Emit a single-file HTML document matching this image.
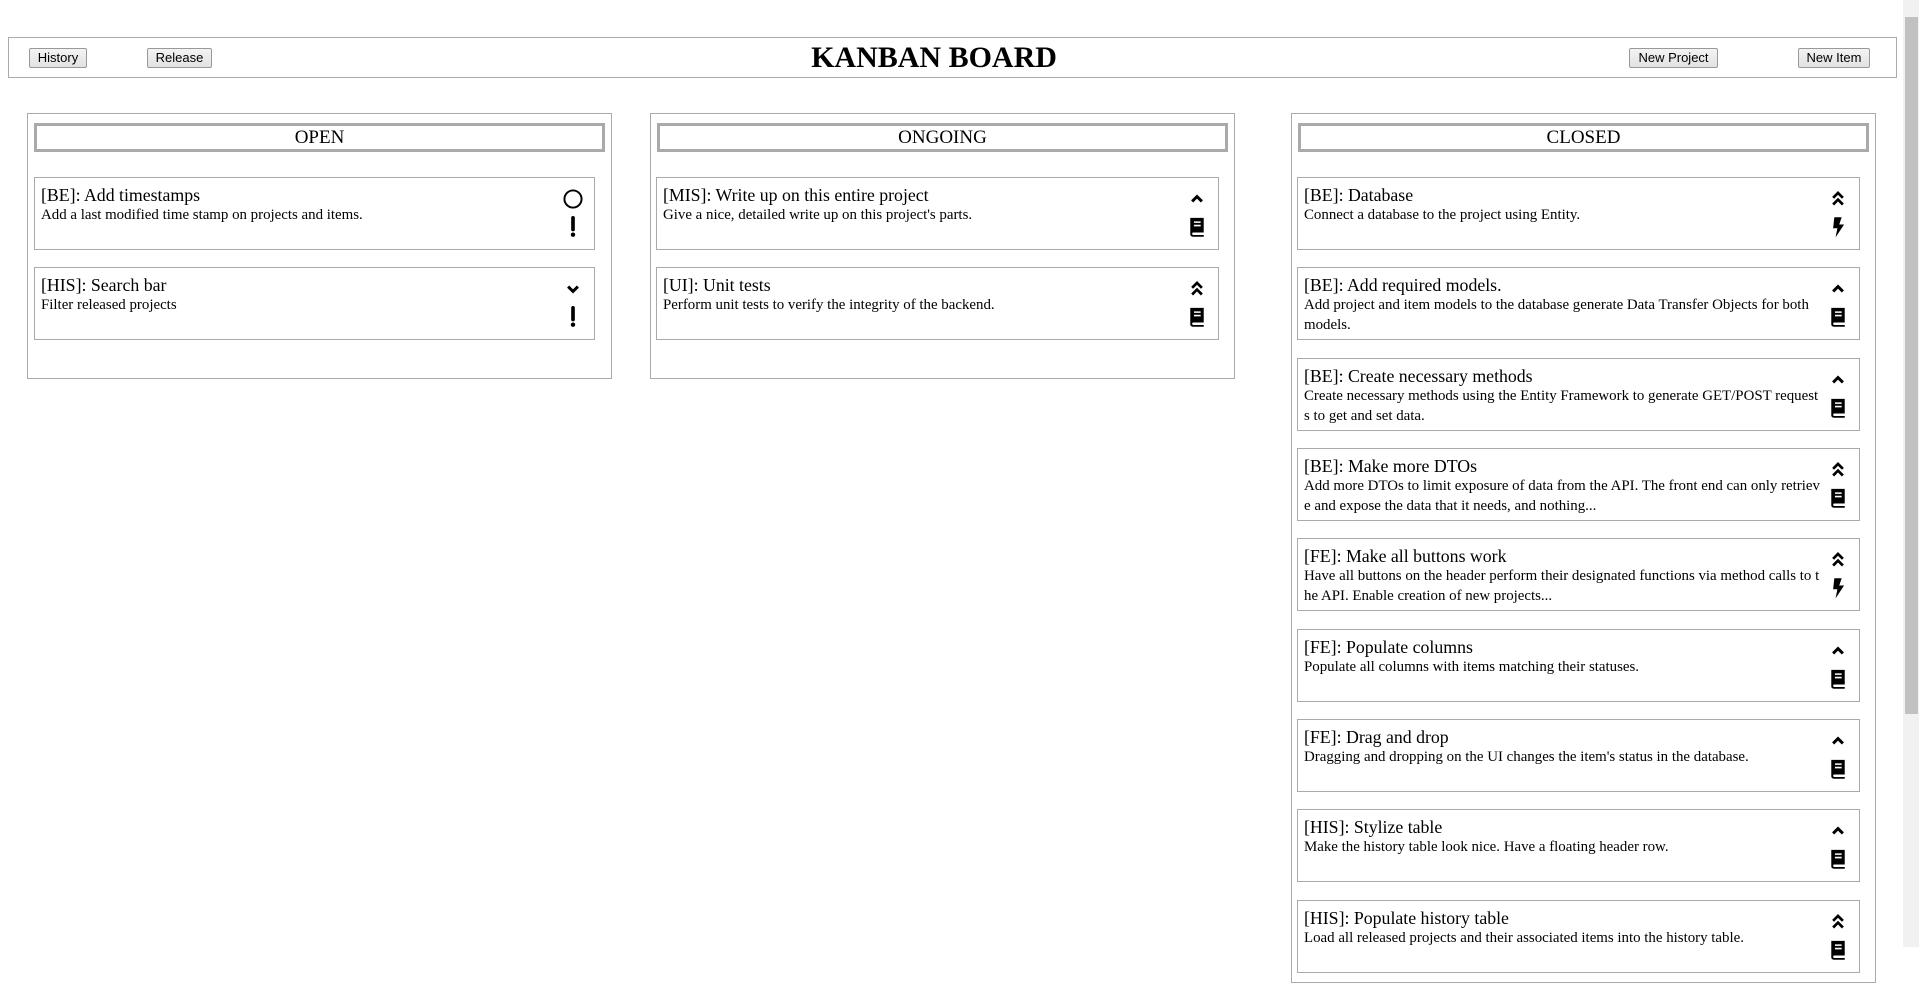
<!DOCTYPE html>
<html><head><meta charset="utf-8"><style>
html,body{margin:0;padding:0;width:1919px;height:947px;overflow:hidden;background:#fff;font-family:"Liberation Serif",serif;color:#000}
.hdr{position:absolute;left:8px;top:37px;width:1889px;height:41px;border:1px solid #aaa;box-sizing:border-box}
.btn{position:absolute;top:48px;height:20px;box-sizing:border-box;border:1px solid #999;background:linear-gradient(#f4f4f4,#e2e2e2);font:13px "Liberation Sans",sans-serif;text-align:center;line-height:18px;border-radius:2px}
.title{position:absolute;left:0;width:1868px;top:39px;text-align:center;font-weight:bold;font-size:30px;line-height:38px}
.col{position:absolute;top:113px;border:1px solid #aaa;box-sizing:border-box}
.ch{position:absolute;left:6px;right:6px;top:9px;height:29px;border:3px solid #aaa;box-sizing:border-box;text-align:center;font-size:19px;line-height:24px}
.card{position:absolute;height:73px;border:1px solid #aaa;box-sizing:border-box;padding:6px 6px 5px}
.ct{font-size:17.8px;line-height:20px;margin-top:1px}
.cd{font-size:14.9px;line-height:19.5px;margin-top:1px;width:calc(100% - 32px);word-break:break-all}
.i1,.i2{position:absolute;right:10px;width:22px;height:22px}
.i1{top:10px}.i2{top:38px}
.sb{position:absolute;left:1903px;top:0;width:16px;height:947px;background:#f1f1f1}
.th{position:absolute;left:1905px;top:17px;width:13px;height:697px;background:#c1c1c1}
</style></head><body>
<svg width="0" height="0" style="position:absolute"><defs>
<symbol id="up" viewBox="0 0 18 18"><path d="M5 11L9 7l4 4" fill="none" stroke="#000" stroke-width="2.4"/></symbol>
<symbol id="dup" viewBox="0 0 18 18"><path d="M5 8L9 4l4 4M5 13.5L9 9.5l4 4" fill="none" stroke="#000" stroke-width="2.2"/></symbol>
<symbol id="down" viewBox="0 0 18 18"><path d="M5 7L9 11 13 7" fill="none" stroke="#000" stroke-width="2.4"/></symbol>
<symbol id="circ" viewBox="0 0 18 18"><circle cx="9" cy="9" r="7" fill="none" stroke="#000" stroke-width="1.6"/></symbol>
<symbol id="excl" viewBox="0 0 18 18"><path d="M9 1.5v9.5" stroke="#000" stroke-width="3" stroke-linecap="round"/><circle cx="9" cy="15.3" r="1.8" fill="#000"/></symbol>
<symbol id="book" viewBox="0 0 18 18"><path d="M3.5 1.5h11v12H6a1 1 0 0 0 0 2h8.5V17H5.5a2 2 0 0 1-2-2z" fill="#000"/><path d="M6.5 5h5.5M6.5 7.8h5.5" stroke="#fff" stroke-width="1.3"/></symbol>
<symbol id="bolt" viewBox="0 0 18 18"><path d="M6 1h6l-2 6h4L7 17.5 8.5 10H5z" fill="#000"/></symbol>
</defs></svg>

<div class="hdr"></div>
<div class="btn" style="left:29px;width:58px">History</div>
<div class="btn" style="left:147px;width:65px">Release</div>
<div class="title">KANBAN BOARD</div>
<div class="btn" style="left:1629px;width:89px">New Project</div>
<div class="btn" style="left:1798px;width:72px">New Item</div>

<div class="col" style="left:27px;width:585px;height:266px"><div class="ch">OPEN</div></div>
<div class="col" style="left:650px;width:585px;height:266px"><div class="ch">ONGOING</div></div>
<div class="col" style="left:1291px;width:585px;height:870px"><div class="ch">CLOSED</div></div>

<div class="card" style="left:34px;top:177px;width:561px"><div class="ct">[BE]: Add timestamps</div><div class="cd">Add a last modified time stamp on projects and items.</div><svg class="i1"><use href="#circ"/></svg><svg class="i2"><use href="#excl"/></svg></div>
<div class="card" style="left:34px;top:267px;width:561px"><div class="ct">[HIS]: Search bar</div><div class="cd">Filter released projects</div><svg class="i1"><use href="#down"/></svg><svg class="i2"><use href="#excl"/></svg></div>

<div class="card" style="left:656px;top:177px;width:563px"><div class="ct">[MIS]: Write up on this entire project</div><div class="cd">Give a nice, detailed write up on this project's parts.</div><svg class="i1"><use href="#up"/></svg><svg class="i2"><use href="#book"/></svg></div>
<div class="card" style="left:656px;top:267px;width:563px"><div class="ct">[UI]: Unit tests</div><div class="cd">Perform unit tests to verify the integrity of the backend.</div><svg class="i1"><use href="#dup"/></svg><svg class="i2"><use href="#book"/></svg></div>

<div class="card" style="left:1297px;top:177px;width:563px"><div class="ct">[BE]: Database</div><div class="cd">Connect a database to the project using Entity.</div><svg class="i1"><use href="#dup"/></svg><svg class="i2"><use href="#bolt"/></svg></div>
<div class="card" style="left:1297px;top:267px;width:563px"><div class="ct">[BE]: Add required models.</div><div class="cd">Add project and item models to the database generate Data Transfer Objects for both models.</div><svg class="i1"><use href="#up"/></svg><svg class="i2"><use href="#book"/></svg></div>
<div class="card" style="left:1297px;top:358px;width:563px"><div class="ct">[BE]: Create necessary methods</div><div class="cd">Create necessary methods using the Entity Framework to generate GET/POST requests to get and set data.</div><svg class="i1"><use href="#up"/></svg><svg class="i2"><use href="#book"/></svg></div>
<div class="card" style="left:1297px;top:448px;width:563px"><div class="ct">[BE]: Make more DTOs</div><div class="cd">Add more DTOs to limit exposure of data from the API. The front end can only retrieve and expose the data that it needs, and nothing...</div><svg class="i1"><use href="#dup"/></svg><svg class="i2"><use href="#book"/></svg></div>
<div class="card" style="left:1297px;top:538px;width:563px"><div class="ct">[FE]: Make all buttons work</div><div class="cd">Have all buttons on the header perform their designated functions via method calls to the API. Enable creation of new projects...</div><svg class="i1"><use href="#dup"/></svg><svg class="i2"><use href="#bolt"/></svg></div>
<div class="card" style="left:1297px;top:629px;width:563px"><div class="ct">[FE]: Populate columns</div><div class="cd">Populate all columns with items matching their statuses.</div><svg class="i1"><use href="#up"/></svg><svg class="i2"><use href="#book"/></svg></div>
<div class="card" style="left:1297px;top:719px;width:563px"><div class="ct">[FE]: Drag and drop</div><div class="cd">Dragging and dropping on the UI changes the item's status in the database.</div><svg class="i1"><use href="#up"/></svg><svg class="i2"><use href="#book"/></svg></div>
<div class="card" style="left:1297px;top:809px;width:563px"><div class="ct">[HIS]: Stylize table</div><div class="cd">Make the history table look nice. Have a floating header row.</div><svg class="i1"><use href="#up"/></svg><svg class="i2"><use href="#book"/></svg></div>
<div class="card" style="left:1297px;top:900px;width:563px"><div class="ct">[HIS]: Populate history table</div><div class="cd">Load all released projects and their associated items into the history table.</div><svg class="i1"><use href="#dup"/></svg><svg class="i2"><use href="#book"/></svg></div>

<div class="sb"></div><div class="th"></div>
</body></html>
